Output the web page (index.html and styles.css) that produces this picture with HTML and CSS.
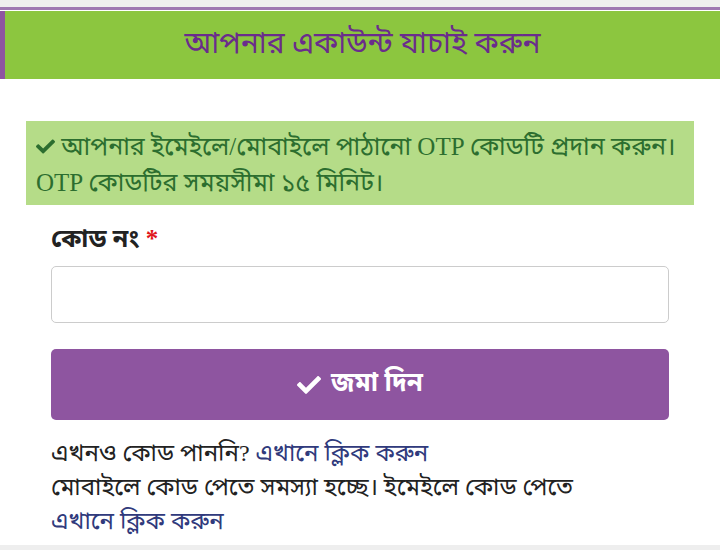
FILE: index.html
```html
<!DOCTYPE html>
<html lang="bn">
<head>
  <meta charset="UTF-8" />
  <meta name="viewport" content="width=device-width, initial-scale=1.0" />
  <title>অ্যাকাউন্ট যাচাই</title>
  <link rel="stylesheet" href="styles.css">
</head>
<body>
  <div class="topbar"></div>
  <div class="page-header">
    <h2>আপনার একাউন্ট যাচাই করুন</h2>
  </div>

  <div class="content">
    <div class="alert">
      <svg class="check" viewBox="0 0 512 512"><path d="M173.9 439.4l-166.4-166.4c-10-10-10-26.2 0-36.2l36.2-36.2c10-10 26.2-10 36.2 0L192 312.7 432.1 72.6c10-10 26.2-10 36.2 0l36.2 36.2c10 10 10 26.2 0 36.2l-294.4 294.4c-10 10-26.2 10-36.2 0z"/></svg>
      আপনার ইমেইলে/মোবাইলে পাঠানো OTP কোডটি প্রদান করুন। OTP কোডটির সময়সীমা ১৫ মিনিট।
    </div>

    <form class="otp-form">
      <div class="form-group">
        <label for="code">কোড নং <span class="required">*</span></label>
        <input type="text" id="code" name="code" />
      </div>
      <button type="submit" class="button">
        <svg class="check" viewBox="0 0 512 512"><path d="M173.9 439.4l-166.4-166.4c-10-10-10-26.2 0-36.2l36.2-36.2c10-10 26.2-10 36.2 0L192 312.7 432.1 72.6c10-10 26.2-10 36.2 0l36.2 36.2c10 10 10 26.2 0 36.2l-294.4 294.4c-10 10-26.2 10-36.2 0z"/></svg>
        জমা দিন
      </button>
      <div class="form-footer">
        <p>এখনও কোড পাননি? <a href="#">এখানে ক্লিক করুন</a></p>
        <p>মোবাইলে কোড পেতে সমস্যা হচ্ছে। ইমেইলে কোড পেতে <a href="#">এখানে ক্লিক করুন</a></p>
      </div>
    </form>
  </div>
  <div class="bottombar"></div>
</body>
</html>
```

FILE: styles.css
```css
body {
  font-family: "Liberation Serif", "Noto Sans Bengali", "Noto Serif Bengali", serif;
  background: #fff;
  margin: 0;
  padding: 0;
  width: 720px;
  height: 550px;
  display: flex;
  flex-direction: column;
  overflow: hidden;
}

.topbar {
  height: 7px;
  background: #efefef;
  border-bottom: 3px solid #9f78b2;
}

.page-header {
  margin-top: 1px;
  height: 68px;
  background: #8cc63f;
  border-left: 5px solid #8e55a0;
  display: flex;
  align-items: center;
  justify-content: center;
}

.page-header h2 {
  margin: 0;
  font-size: 30px;
  font-weight: normal;
  color: #6a2c8c;
}

.content {
  flex: 1;
  padding: 42px 26px 0;
}

.alert {
  background: #b5dc88;
  color: #2c6e2f;
  font-size: 25px;
  line-height: 36px;
  padding: 8px 10px 4px;
}

.alert .check {
  width: 19px;
  height: 19px;
  fill: #2c6e2f;
  vertical-align: -1px;
}

.otp-form {
  padding: 19px 25px 0;
}

.form-group label {
  display: block;
  font-size: 25px;
  font-weight: bold;
  line-height: 30px;
  color: #222;
  margin-bottom: 12px;
}

.required {
  color: #e0151b;
}

.form-group input {
  display: block;
  box-sizing: border-box;
  width: 100%;
  height: 57px;
  border: 1px solid #ccc;
  border-radius: 5px;
  font-size: 18px;
  padding: 0 12px;
}

.button {
  display: flex;
  align-items: center;
  justify-content: center;
  gap: 10px;
  width: 100%;
  height: 71px;
  margin-top: 26px;
  background: #8e55a0;
  color: #fff;
  border: none;
  border-radius: 5px;
  font-family: inherit;
  font-size: 26px;
  font-weight: bold;
  cursor: pointer;
}

.button .check {
  width: 24px;
  height: 24px;
  fill: #fff;
}

.form-footer {
  margin-top: 16px;
  font-size: 24px;
  line-height: 34px;
  color: #222;
}

.form-footer p {
  margin: 0;
}

.form-footer a {
  color: #303a7c;
  text-decoration: none;
  white-space: nowrap;
}

.bottombar {
  height: 5px;
  background: #eee;
}
```
